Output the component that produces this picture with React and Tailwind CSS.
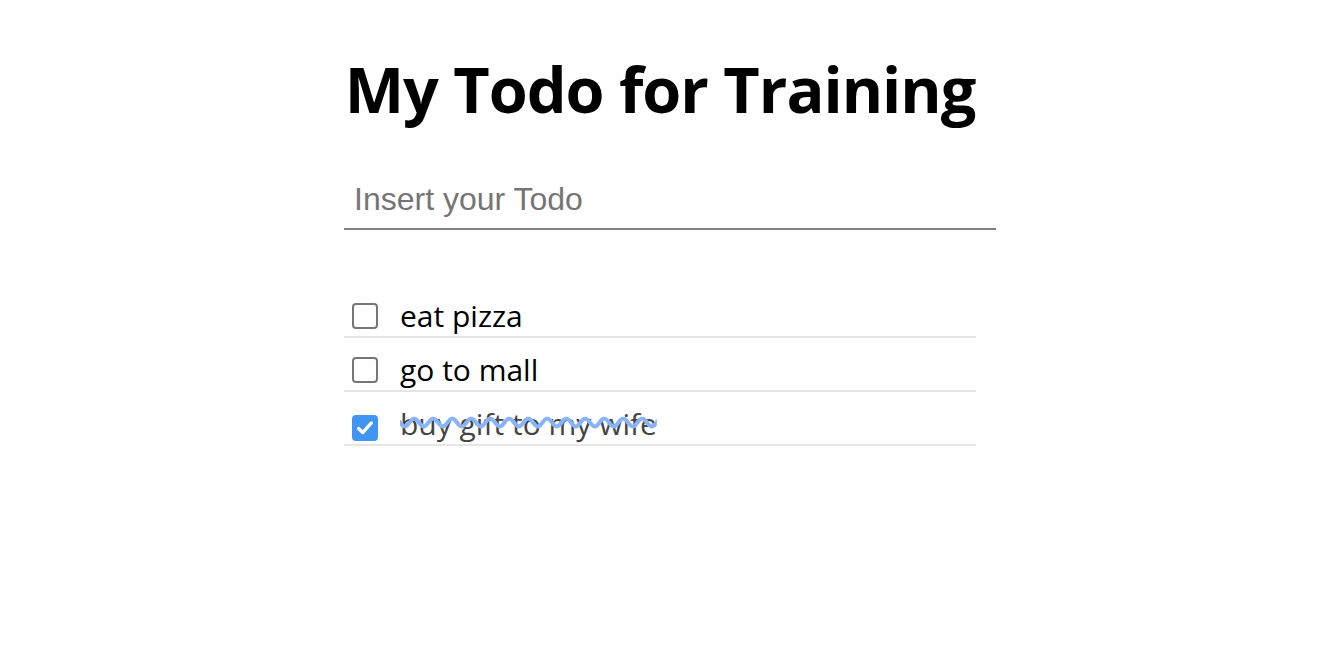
import { useState } from 'react';

const initialTodos = [
  { id: 1, text: 'eat pizza', done: false },
  { id: 2, text: 'go to mall', done: false },
  { id: 3, text: 'buy gift to my wife', done: true },
];

function CheckBox({ checked, onChange }) {
  return (
    <button
      type="button"
      onClick={onChange}
      className={
        checked
          ? 'w-[26px] h-[26px] shrink-0 rounded-[4px] bg-[#4095f3] flex items-center justify-center'
          : 'w-[26px] h-[26px] shrink-0 rounded-[4px] border-2 border-[#767676] bg-white'
      }
    >
      {checked && (
        <svg viewBox="0 0 24 24" className="w-[22px] h-[22px]" fill="none" stroke="white" strokeWidth="3.6" strokeLinecap="round" strokeLinejoin="round">
          <path d="M5 12.5l4.5 4.5L19 6.5" />
        </svg>
      )}
    </button>
  );
}

export default function App() {
  const [todos, setTodos] = useState(initialTodos);
  const [value, setValue] = useState('');

  const toggle = (id) =>
    setTodos(todos.map((t) => (t.id === id ? { ...t, done: !t.done } : t)));

  return (
    <div className="min-h-screen bg-white font-['Open_Sans',sans-serif] text-black">
      <div className="w-[632px] mx-auto pt-[46px]">
        <h1 className="text-[63px] font-bold leading-[86px] text-center tracking-[-1px]">My Todo for Training</h1>

        <form
          className="mt-[42px]"
          onSubmit={(e) => {
            e.preventDefault();
            if (!value.trim()) return;
            setTodos([...todos, { id: Date.now(), text: value, done: false }]);
            setValue('');
          }}
        >
          <input
            value={value}
            onChange={(e) => setValue(e.target.value)}
            placeholder="Insert your Todo"
            className="box-content w-full px-[10px] pb-[4px] h-[50px] text-[32px] font-['Liberation_Sans',Arial,sans-serif] border-b-2 border-[#808080] outline-none placeholder:text-[#757575]"
          />
        </form>

        {/* Todo list */}
        <ul className="mt-[54px]">
          {todos.map((todo) => (
            <li key={todo.id} className="flex items-end h-[54px] border-b-2 border-[#e6e6e6]">
              <div className="pl-[8px] pr-[22px] pb-[3px]">
                <CheckBox checked={todo.done} onChange={() => toggle(todo.id)} />
              </div>
              <span
                className={
                  todo.done
                    ? 'text-[30px] leading-[40px] text-[#444] line-through decoration-wavy decoration-[#8ab4f8] decoration-[4px]'
                    : 'text-[30px] leading-[40px]'
                }
              >
                {todo.text}
              </span>
            </li>
          ))}
        </ul>
      </div>
    </div>
  );
}
